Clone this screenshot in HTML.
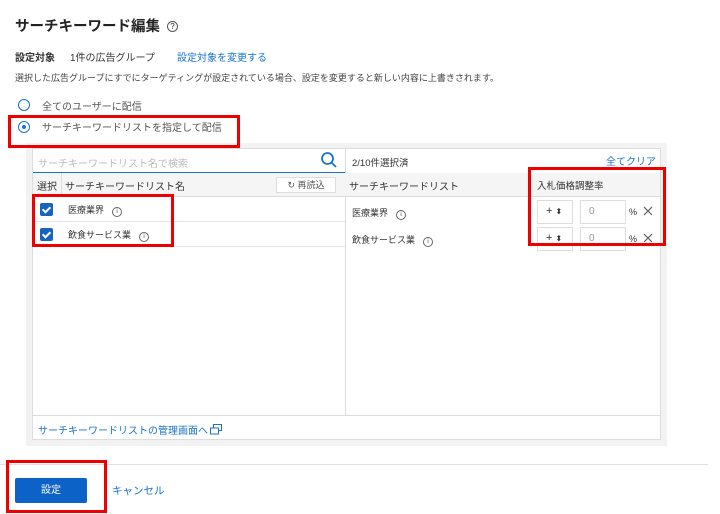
<!DOCTYPE html>
<html><head><meta charset="utf-8"><style>
*{box-sizing:border-box;margin:0;padding:0}
body{width:720px;height:514px;background:#fff;font-family:"Liberation Sans","Noto Sans CJK JP",sans-serif;color:#333;position:relative;overflow:hidden;font-size:10px}
.a{position:absolute}
.blue{color:#1a73c8}
.red{position:absolute;border:3px solid #e00;}
.cb{position:absolute;width:13px;height:13px;background:#1565c0;border-radius:2px}
.cb:after{content:"";position:absolute;left:4px;top:1.5px;width:3px;height:6px;border:solid #fff;border-width:0 2px 2px 0;transform:rotate(45deg)}
.info{display:inline-block;width:10px;height:10px;border:1px solid #666;border-radius:50%;font-size:6px;text-align:center;line-height:8px;margin-left:8px;vertical-align:0px;font-family:"Liberation Sans",sans-serif}
.box{position:absolute;border:1px solid #ddd;background:#fff}
</style></head><body>
<div class="a" style="left:15px;top:15px;font-size:14.5px;font-weight:bold;color:#222">サーチキーワード編集 <span style="display:inline-block;width:11px;height:11px;border:1px solid #555;border-radius:50%;font-size:8px;line-height:9px;text-align:center;font-weight:normal;margin-left:3px;vertical-align:2px">?</span></div>
<div class="a" style="left:15px;top:49px;font-size:10px;font-weight:bold">設定対象</div>
<div class="a" style="left:70px;top:49px;font-size:10px">1件の広告グループ</div>
<div class="a blue" style="left:177px;top:49px;font-size:10px">設定対象を変更する</div>
<div class="a" style="left:15px;top:71px;font-size:9px;color:#444">選択した広告グループにすでにターゲティングが設定されている場合、設定を変更すると新しい内容に上書きされます。</div>
<div class="a" style="left:18px;top:99px;width:12px;height:12px;border:1.5px solid #1a73c8;border-radius:50%"></div>
<div class="a" style="left:42px;top:98px;font-size:10px;color:#555">全てのユーザーに配信</div>
<div class="a" style="left:18px;top:121px;width:12px;height:12px;border:1.5px solid #1a73c8;border-radius:50%"><div style="position:absolute;left:2.5px;top:2.5px;width:4px;height:4px;background:#1a73c8;border-radius:50%"></div></div>
<div class="a" style="left:42px;top:119px;font-size:10px;color:#555">サーチキーワードリストを指定して配信</div>

<div class="a" style="left:26px;top:143px;width:641px;height:303px;background:#f2f2f2"></div>
<div class="box" style="left:32px;top:148px;width:629px;height:292px"></div>
<div class="a" style="left:345px;top:148px;width:1px;height:267px;background:#ddd"></div>
<div class="a" style="left:38px;top:155px;font-size:10px;color:#bbb">サーチキーワードリスト名で検索</div>
<svg class="a" style="left:320px;top:151px" width="18" height="18" viewBox="0 0 18 18"><circle cx="7.5" cy="7.5" r="5.5" fill="none" stroke="#1a73c8" stroke-width="1.8"/><line x1="11.5" y1="11.5" x2="16" y2="16" stroke="#1a73c8" stroke-width="1.8"/></svg>
<div class="a" style="left:33px;top:172px;width:312px;height:1px;background:#1a73c8"></div>
<div class="a" style="left:33px;top:173px;width:627px;height:24px;background:#f5f5f5;border-bottom:1px solid #ddd"></div>
<div class="a" style="left:37px;top:178px;font-size:10px">選択</div>
<div class="a" style="left:61px;top:173px;width:1px;height:24px;background:#ddd"></div>
<div class="a" style="left:65px;top:178px;font-size:10px">サーチキーワードリスト名</div>
<div class="a" style="left:276px;top:177px;width:60px;height:16px;border:1px solid #ddd;background:#fff;font-size:9px;color:#555;text-align:center;line-height:14px">↻ 再読込</div>
<div class="a" style="left:33px;top:221px;width:312px;height:1px;background:#e6e6e6"></div>
<div class="a" style="left:33px;top:246px;width:312px;height:1px;background:#e6e6e6"></div>
<div class="cb" style="left:40px;top:203px"></div>
<div class="a" style="left:68px;top:203px;font-size:9px">医療業界<span class="info">i</span></div>
<div class="cb" style="left:40px;top:228px"></div>
<div class="a" style="left:68px;top:228px;font-size:9px">飲食サービス業<span class="info">i</span></div>
<div class="a" style="left:352px;top:155px;font-size:9.5px">2/10件選択済</div>
<div class="a blue" style="left:606px;top:153px;font-size:10px">全てクリア</div>
<div class="a" style="left:349px;top:178px;font-size:10px">サーチキーワードリスト</div>
<div class="a" style="left:537px;top:178px;font-size:9.5px">入札価格調整率</div>
<div class="a" style="left:352px;top:206px;font-size:9px">医療業界<span class="info">i</span></div>
<div class="a" style="left:352px;top:233px;font-size:9px">飲食サービス業<span class="info">i</span></div>
<div class="box" style="left:537px;top:200px;width:36px;height:24px;font-size:11px;padding:4px 0 0 8px">+ <span style="font-size:8px">⬍</span></div>
<div class="box" style="left:580px;top:200px;width:46px;height:24px;font-size:10px;color:#999;padding:5px 0 0 8px">0</div>
<div class="a" style="left:629px;top:207px;font-size:9px">%</div>
<svg class="a" style="left:643px;top:206px" width="10" height="10"><path d="M1 1L9 9M9 1L1 9" stroke="#555" stroke-width="1.1"/></svg>
<div class="box" style="left:537px;top:227px;width:36px;height:24px;font-size:11px;padding:4px 0 0 8px">+ <span style="font-size:8px">⬍</span></div>
<div class="box" style="left:580px;top:227px;width:46px;height:24px;font-size:10px;color:#999;padding:5px 0 0 8px">0</div>
<div class="a" style="left:629px;top:234px;font-size:9px">%</div>
<svg class="a" style="left:643px;top:233px" width="10" height="10"><path d="M1 1L9 9M9 1L1 9" stroke="#555" stroke-width="1.1"/></svg>
<div class="a" style="left:33px;top:415px;width:627px;height:1px;background:#ddd"></div>
<div class="a blue" style="left:38px;top:422px;font-size:10px">サーチキーワードリストの管理画面へ</div>
<svg class="a" style="left:210px;top:424px" width="12" height="11" viewBox="0 0 12 11"><rect x="3.5" y="0.5" width="8" height="6" fill="none" stroke="#1a73c8"/><rect x="0.5" y="4" width="8" height="6" fill="#fff" stroke="#1a73c8"/></svg>

<div class="a" style="left:0;top:464px;width:708px;height:1px;background:#e0e0e0"></div>
<div class="a" style="left:15px;top:478px;width:72px;height:25px;background:#0d62c8;border-radius:2px;color:#fff;font-size:10px;text-align:center;line-height:25px">設定</div>
<div class="a blue" style="left:112px;top:483px;font-size:10.5px">キャンセル</div>

<div class="red" style="left:8px;top:115px;width:232px;height:33px"></div>
<div class="red" style="left:32px;top:194px;width:142px;height:53px"></div>
<div class="red" style="left:528px;top:167px;width:138px;height:79px"></div>
<div class="red" style="left:6px;top:460px;width:101px;height:53px"></div>
</body></html>
